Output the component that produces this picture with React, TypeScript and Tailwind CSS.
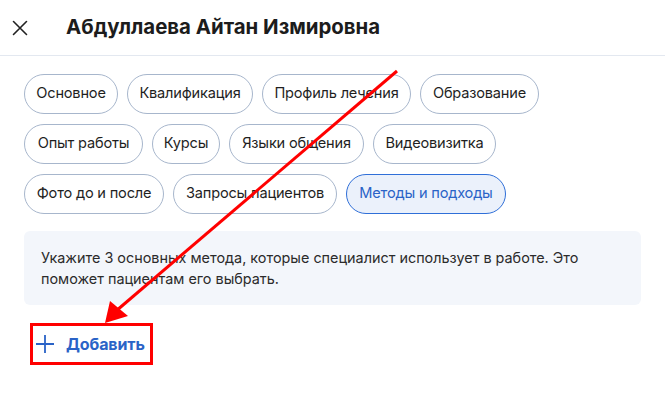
import React from "react";

const chips: [string, number][][] = [
  [["Основное", 94], ["Квалификация", 126], ["Профиль лечения", 149], ["Образование", 119]],
  [["Опыт работы", 119], ["Курсы", 68], ["Языки общения", 135], ["Видеовизитка", 123]],
  [["Фото до и после", 140], ["Запросы пациентов", 164], ["Методы и подходы", 160]],
];

export default function App() {
  return (
    <div
      className="relative w-[665px] h-[405px] bg-white overflow-hidden text-[#1f1f1f]"
      style={{ fontFamily: "Inter, 'Noto Sans', sans-serif" }}
    >
      <div className="h-[56px] flex items-center border-b border-[#e3e8f0]">
        <div className="w-[66px] flex items-center pl-[12px]">
          <svg width="16" height="16" viewBox="0 0 16 16">
            <path d="M1.5 1.5 L14.5 14.5 M14.5 1.5 L1.5 14.5" stroke="#222" strokeWidth="1.6" strokeLinecap="round" />
          </svg>
        </div>
        <h1 className="text-[20.4px] font-bold leading-none text-[#1c1c1c]">
          Абдуллаева Айтан Измировна
        </h1>
      </div>

      <div className="px-[24px] pt-[18px] flex flex-col gap-[10px]">
        {chips.map((row, i) => (
          <div key={i} className="flex gap-[9px]">
            {row.map(([c, w]) => {
              const active = c === "Методы и подходы";
              return (
                <div
                  key={c}
                  style={{ width: w }}
                  className={
                    active
                      ? "h-[40px] shrink-0 flex items-center justify-center whitespace-nowrap rounded-full border border-[#2f6fd8] bg-[#ebf1fb] text-[#2a63c7] text-[14.6px] tracking-[-0.2px]"
                      : "h-[40px] shrink-0 flex items-center justify-center whitespace-nowrap rounded-full border border-[#a7b6cc] bg-white text-[#1f1f1f] text-[14.6px] tracking-[-0.2px]"
                  }
                >
                  {c}
                </div>
              );
            })}
          </div>
        ))}
      </div>

      <div className="mx-[24px] mt-[17px] w-[617px] rounded-[6px] bg-[#f3f6fb] px-[17px] pt-[16px] pb-[16px] text-[14.4px] leading-[21px] text-[#2b2b2b]">
        Укажите 3 основных метода, которые специалист использует в работе. Это поможет пациентам его выбрать.
      </div>

      <div className="ml-[30px] mt-[18px] w-[123px] h-[42px] border-[3px] border-[#ff0000] flex items-center pl-[3px]">
        <svg width="18" height="18" viewBox="0 0 18 18">
          <path d="M9 0 V18 M0 9 H18" stroke="#2a63c7" strokeWidth="1.8" />
        </svg>
        <span className="ml-[12px] text-[16px] font-bold text-[#2a63c7] tracking-[-0.1px]">Добавить</span>
      </div>

      <svg className="absolute left-0 top-0 pointer-events-none" width="665" height="405" viewBox="0 0 665 405">
        <line x1="397" y1="71" x2="116" y2="311" stroke="#ff0000" strokeWidth="3" />
        <polygon points="105,323 110,301 128,316" fill="#ff0000" />
      </svg>
    </div>
  );
}
